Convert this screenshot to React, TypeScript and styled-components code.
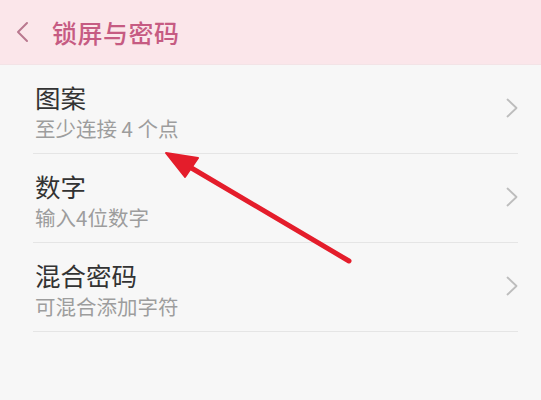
import styled, { createGlobalStyle } from 'styled-components';

const GlobalStyle = createGlobalStyle`
  html, body {
    margin: 0;
    padding: 0;
    background: #f7f7f7;
  }
  body {
    font-family: "Noto Sans CJK SC", "Noto Sans", sans-serif;
  }
`;

const Screen = styled.div`
  position: relative;
  width: 541px;
  height: 400px;
  overflow: hidden;
  background: #f7f7f7;
`;

const Header = styled.header`
  display: flex;
  align-items: center;
  height: 65px;
  padding-left: 16px;
  background: #fbe6ea;
  border-bottom: 1px solid #f3e3e6;
  box-sizing: border-box;
`;

const BackButton = styled.svg`
  width: 14px;
  height: 22px;
  margin-right: 22px;
  flex-shrink: 0;
`;

const HeaderTitle = styled.h1`
  margin: 0;
  font-size: 25px;
  font-weight: 500;
  color: #c65b82;
  letter-spacing: 0.5px;
`;

const List = styled.ul`
  list-style: none;
  margin: 0;
  padding: 0 23px 0 33px;
`;

const Row = styled.li`
  display: flex;
  align-items: center;
  justify-content: space-between;
  padding: 17px 0 13px 2px;
  border-bottom: 1px solid #e5e5e5;
`;

const Texts = styled.div`
  display: flex;
  flex-direction: column;
  gap: 4px;
`;

const Title = styled.span`
  font-size: 25.5px;
  line-height: 30px;
  color: #333333;
`;

const Subtitle = styled.span`
  font-size: 20.5px;
  line-height: 24px;
  color: #9d9d9d;
`;

const Chevron = styled.svg`
  width: 12px;
  height: 20px;
  margin-bottom: 6px;
`;

const Arrow = styled.svg`
  position: absolute;
  left: 0;
  top: 0;
  pointer-events: none;
`;

const items = [
  { title: '图案', subtitle: '至少连接 4 个点' },
  { title: '数字', subtitle: '输入4位数字' },
  { title: '混合密码', subtitle: '可混合添加字符' },
];

export default function App() {
  return (
    <Screen>
      <GlobalStyle />
      <Header>
        <BackButton viewBox="0 0 14 22">
          <path d="M11 2 L2 11 L11 20" fill="none" stroke="#b9788f" strokeWidth="2" strokeLinecap="round" strokeLinejoin="round" />
        </BackButton>
        <HeaderTitle>锁屏与密码</HeaderTitle>
      </Header>
      <List>
        {items.map((item) => (
          <Row key={item.title}>
            <Texts>
              <Title>{item.title}</Title>
              <Subtitle>{item.subtitle}</Subtitle>
            </Texts>
            <Chevron viewBox="0 0 12 20">
              <path d="M1.5 1.5 L10.5 10 L1.5 18.5" fill="none" stroke="#bdbdbd" strokeWidth="1.8" strokeLinecap="round" strokeLinejoin="round" />
            </Chevron>
          </Row>
        ))}
      </List>
      <Arrow width="541" height="400" viewBox="0 0 541 400">
        <line x1="349" y1="261" x2="183" y2="163" stroke="#e41d2b" strokeWidth="5" strokeLinecap="round" />
        <polygon points="166,153 198,158 185,177" fill="#e41d2b" stroke="#e41d2b" strokeWidth="2" strokeLinejoin="round" />
      </Arrow>
    </Screen>
  );
}
